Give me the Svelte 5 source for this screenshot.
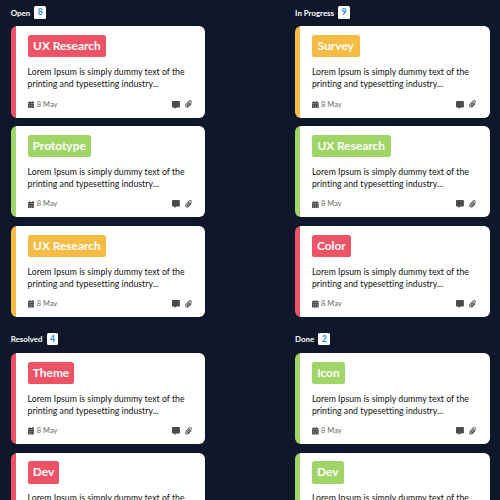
<script>
  const red = '#ee5365';
  const green = '#a0d568';
  const amber = '#f6bb42';
  const columns = [
    { title: 'Open', count: 8, cards: [['UX Research', red, 78.6], ['Prototype', green, 63.2], ['UX Research', amber, 78.6]] },
    { title: 'In Progress', count: 9, cards: [['Survey', amber, 47.8], ['UX Research', green, 78.6], ['Color', red, 39]] },
    { title: 'Resolved', count: 4, cards: [['Theme', red, 46.8], ['Dev', red, 31.8]] },
    { title: 'Done', count: 2, cards: [['Icon', green, 33], ['Dev', green, 31.8]] }
  ];
</script>

<main>
  {#each columns as column}
    <section>
      <header>
        <h2>{column.title}</h2>
        <span class="count">{column.count}</span>
      </header>
      {#each column.cards as [label, color, width]}
        <article style="--accent: {color}">
          <h3 style="width: {width}px">{label}</h3>
          <p>Lorem Ipsum is simply dummy text of the<br />printing and typesetting industry...</p>
          <footer>
            <svg class="calendar" viewBox="0 0 448 512">
              <path fill-rule="evenodd" d="M0 464c0 26 22 48 48 48h352c26 0 48-22 48-48V180H0v284zm74-182h44v44H74v-44zm128 0h44v44h-44v-44zm128 0h44v44h-44v-44zM74 394h44v44H74v-44zm128 0h44v44h-44v-44zm128 0h44v44h-44v-44zM400 64h-48V16c0-9-7-16-16-16h-32c-9 0-16 7-16 16v48H160V16c0-9-7-16-16-16h-32c-9 0-16 7-16 16v48H48C22 64 0 86 0 112v54h448v-54c0-26-22-48-48-48z" />
            </svg>
            <time>8 May</time>
            <svg class="comment" viewBox="0 0 512 512">
              <path d="M448 0H64C29 0 0 29 0 64v288c0 35 29 64 64 64h96v84c0 10 11 15 19 9l125-93h144c35 0 64-29 64-64V64c0-35-29-64-64-64z" />
            </svg>
            <svg class="clip" viewBox="0 0 448 512">
              <path d="M43 247l205-209a102 102 0 0 1 147 0c41 42 41 108 0 150L217 370a66 66 0 0 1-96-2c-25-27-24-69 1-95l141-143c6-7 16-7 23-1l22 23c7 6 7 16 0 23L169 318c-3 4-4 9 0 12 3 4 8 4 11 0L358 148c19-19 19-49 0-68a48 48 0 0 0-69 0L84 288c-27 29-27 75 0 103s72 28 99 0l168-172c7-6 17-7 23 0l23 22c6 6 7 16 0 23L229 437c-52 53-136 53-187 0-51-52-51-137 1-190z" />
            </svg>
          </footer>
        </article>
      {/each}
    </section>
  {/each}
</main>

<style>
  :global(body) {
    margin: 0;
    background: #0f172a;
    overflow: hidden;
  }
  main {
    box-sizing: border-box;
    height: 500px;
    overflow: hidden;
    padding: 6.2px 10.4px 0 10.8px;
    display: grid;
    grid-template-columns: 194.5px 194.5px;
    justify-content: space-between;
    align-content: start;
    row-gap: 15.6px;
    font-family: Lato, "Noto Sans", sans-serif;
    background: #0f172a;
  }
  header {
    display: flex;
    align-items: center;
    gap: 4.2px;
    height: 12.6px;
    margin-bottom: 7.5px;
  }
  h2 {
    margin: 0;
    padding-top: 0.8px;
    font-size: 7.9px;
    line-height: 12px;
    font-weight: 700;
    color: #fff;
  }
  .count {
    width: 11.5px;
    height: 12.6px;
    border-radius: 1.5px;
    background: #fff;
    color: #2b87e9;
    font-size: 8.6px;
    font-weight: 700;
    line-height: 13.4px;
    text-align: center;
  }
  article {
    box-sizing: border-box;
    height: 91.3px;
    padding: 8.7px 13.1px 0 16.8px;
    border-radius: 6px;
    background: linear-gradient(to right, var(--accent) 5.4px, #fff 5.4px);
  }
  article + article {
    margin-top: 8.5px;
  }
  h3 {
    margin: 0;
    height: 22.2px;
    border-radius: 2.6px;
    background: var(--accent);
    color: #fff;
    font-size: 11.9px;
    font-weight: 700;
    line-height: 22.6px;
    text-align: center;
    white-space: nowrap;
  }
  p {
    margin: 8.8px 0 0;
    font-size: 8.7px;
    line-height: 12.4px;
    letter-spacing: 0.03px;
    color: #111;
    white-space: nowrap;
  }
  footer {
    display: flex;
    align-items: center;
    height: 10px;
    margin-top: 8.8px;
    color: #666;
  }
  svg {
    display: block;
    fill: #4b4b4b;
  }
  .calendar {
    width: 6.7px;
    height: 7.6px;
  }
  time {
    margin: 0 auto 0 2.5px;
    font-size: 7.5px;
    line-height: 10px;
  }
  .comment {
    width: 7.9px;
    height: 7.9px;
  }
  .clip {
    width: 7.2px;
    height: 8.2px;
    margin-left: 4.6px;
    margin-right: 0.4px;
    fill: #606060;
  }
</style>
